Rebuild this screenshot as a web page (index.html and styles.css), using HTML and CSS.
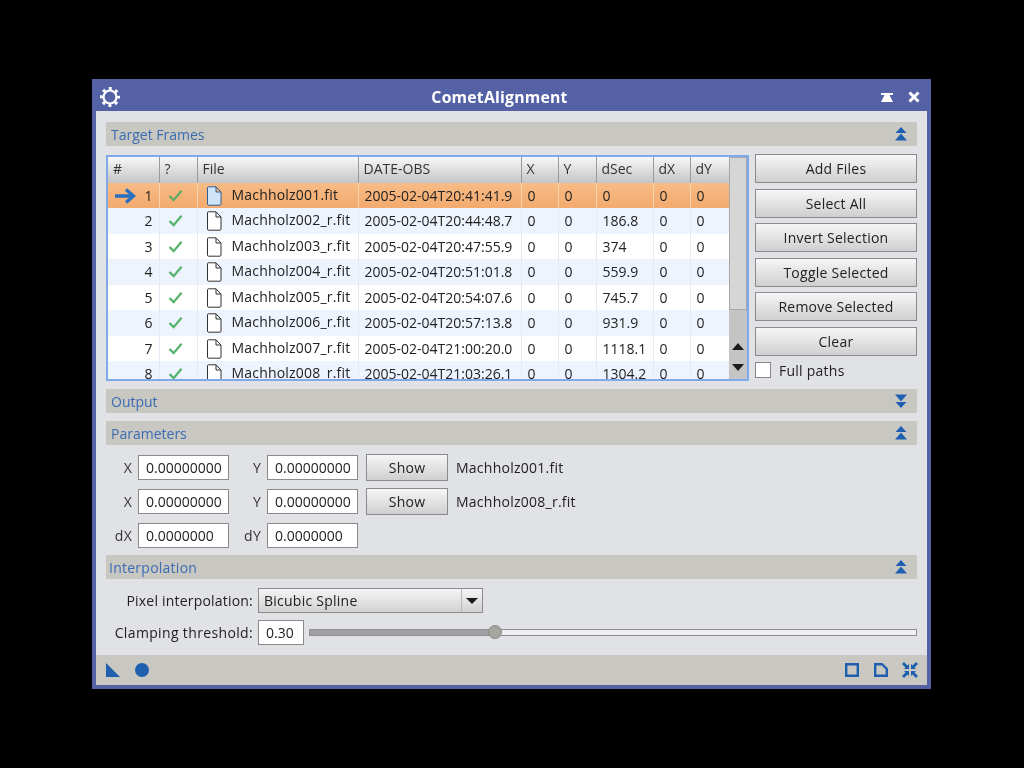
FILE: index.html
```html
<!DOCTYPE html>
<html lang="en">
<head>
    <meta charset="UTF-8">
    <title>CometAlignment</title>
    <link rel="stylesheet" href="styles.css">
</head>
<body>
    <svg class="defs" width="0" height="0">
        <symbol id="sec-up" viewBox="0 0 12 14"><path d="M6 0 11.500 6H.5zM6 6.500 12 13.500H0z"/></symbol>
        <symbol id="sec-down" viewBox="0 0 12 14"><path d="M0 .5H12L6 7.500zM.5 8H11.500L6 14z"/></symbol>
        <symbol id="doc" viewBox="0 0 16 20"><path d="M1.500 1.500C1.500 1 2 .8 2.500.8H10L15 6V18C15 18.800 14.500 19.200 14 19.200H2.500C2 19.200 1.500 18.800 1.500 18Z M10 .8V6H15"/></symbol>
        <symbol id="check" viewBox="0 0 16 14"><path d="M1.500 7.500 6 12 14.500 2" fill="none" stroke-width="2.500"/></symbol>
    </svg>

    <div class="window">
        <!-- Title bar -->
        <div class="titlebar">
            <svg class="gear" viewBox="0 0 24 24"><circle class="gear-ring" cx="12" cy="12" r="6.500"/><circle class="gear-teeth" cx="12" cy="12" r="8.500"/></svg>
            <div class="title">CometAlignment</div>
            <div class="title-buttons">
                <svg class="tb-shade" viewBox="0 0 12 9"><path d="M0 0H12V2H8.500L12 9H0L3.500 2H0z"/></svg>
                <svg class="tb-close" viewBox="0 0 12 12"><path d="M1.500 1.500 10.500 10.500M10.500 1.500 1.500 10.500"/></svg>
            </div>
        </div>

        <div class="content">
            <!-- Target Frames -->
            <div class="section-bar">
                <span>Target Frames</span>
                <svg class="sec-icon"><use href="#sec-up"/></svg>
            </div>
            <div class="frames">
                <div class="table-box">
                    <div class="table-clip">
                        <table>
                            <colgroup>
                                <col class="c-num"><col class="c-ok"><col class="c-file"><col class="c-date">
                                <col class="c-x"><col class="c-y"><col class="c-sec"><col class="c-dx"><col class="c-dy">
                            </colgroup>
                            <tr class="head">
                                <th>#</th><th>?</th><th>File</th><th>DATE-OBS</th><th>X</th><th>Y</th><th>dSec</th><th>dX</th><th>dY</th>
                            </tr>
                            <tr class="selected">
                                <td class="num"><svg class="arrow" viewBox="0 0 22 16"><path d="M1 8H19M12 1.500 19.500 8 12 14.500"/></svg>1</td>
                                <td><svg class="check"><use href="#check"/></svg></td>
                                <td class="file"><svg class="doc"><use href="#doc"/></svg>Machholz001.fit</td>
                                <td>2005-02-04T20:41:41.9</td><td>0</td><td>0</td><td>0</td><td>0</td><td>0</td>
                            </tr>
                            <tr class="alt">
                                <td class="num">2</td>
                                <td><svg class="check"><use href="#check"/></svg></td>
                                <td class="file"><svg class="doc"><use href="#doc"/></svg>Machholz002_r.fit</td>
                                <td>2005-02-04T20:44:48.7</td><td>0</td><td>0</td><td>186.8</td><td>0</td><td>0</td>
                            </tr>
                            <tr>
                                <td class="num">3</td>
                                <td><svg class="check"><use href="#check"/></svg></td>
                                <td class="file"><svg class="doc"><use href="#doc"/></svg>Machholz003_r.fit</td>
                                <td>2005-02-04T20:47:55.9</td><td>0</td><td>0</td><td>374</td><td>0</td><td>0</td>
                            </tr>
                            <tr class="alt">
                                <td class="num">4</td>
                                <td><svg class="check"><use href="#check"/></svg></td>
                                <td class="file"><svg class="doc"><use href="#doc"/></svg>Machholz004_r.fit</td>
                                <td>2005-02-04T20:51:01.8</td><td>0</td><td>0</td><td>559.9</td><td>0</td><td>0</td>
                            </tr>
                            <tr>
                                <td class="num">5</td>
                                <td><svg class="check"><use href="#check"/></svg></td>
                                <td class="file"><svg class="doc"><use href="#doc"/></svg>Machholz005_r.fit</td>
                                <td>2005-02-04T20:54:07.6</td><td>0</td><td>0</td><td>745.7</td><td>0</td><td>0</td>
                            </tr>
                            <tr class="alt">
                                <td class="num">6</td>
                                <td><svg class="check"><use href="#check"/></svg></td>
                                <td class="file"><svg class="doc"><use href="#doc"/></svg>Machholz006_r.fit</td>
                                <td>2005-02-04T20:57:13.8</td><td>0</td><td>0</td><td>931.9</td><td>0</td><td>0</td>
                            </tr>
                            <tr>
                                <td class="num">7</td>
                                <td><svg class="check"><use href="#check"/></svg></td>
                                <td class="file"><svg class="doc"><use href="#doc"/></svg>Machholz007_r.fit</td>
                                <td>2005-02-04T21:00:20.0</td><td>0</td><td>0</td><td>1118.1</td><td>0</td><td>0</td>
                            </tr>
                            <tr class="alt">
                                <td class="num">8</td>
                                <td><svg class="check"><use href="#check"/></svg></td>
                                <td class="file"><svg class="doc"><use href="#doc"/></svg>Machholz008_r.fit</td>
                                <td>2005-02-04T21:03:26.1</td><td>0</td><td>0</td><td>1304.2</td><td>0</td><td>0</td>
                            </tr>
                        </table>
                    </div>
                    <div class="scrollbar">
                        <div class="thumb"></div>
                        <div class="arrow-up"></div>
                        <div class="arrow-down"></div>
                    </div>
                </div>
                <div class="side">
                    <button class="btn">Add Files</button>
                    <button class="btn">Select All</button>
                    <button class="btn">Invert Selection</button>
                    <button class="btn">Toggle Selected</button>
                    <button class="btn">Remove Selected</button>
                    <button class="btn">Clear</button>
                    <div class="check-row"><span class="checkbox"></span>Full paths</div>
                </div>
            </div>

            <!-- Output -->
            <div class="section-bar bar-output">
                <span>Output</span>
                <svg class="sec-icon"><use href="#sec-down"/></svg>
            </div>

            <!-- Parameters -->
            <div class="section-bar bar-params">
                <span>Parameters</span>
                <svg class="sec-icon"><use href="#sec-up"/></svg>
            </div>
            <div class="params">
                <div class="param-row">
                    <span class="lbl">X</span><span class="field">0.00000000</span>
                    <span class="lbl lbl-y">Y</span><span class="field">0.00000000</span>
                    <button class="btn btn-show">Show</button><span class="frame-name">Machholz001.fit</span>
                </div>
                <div class="param-row">
                    <span class="lbl">X</span><span class="field">0.00000000</span>
                    <span class="lbl lbl-y">Y</span><span class="field">0.00000000</span>
                    <button class="btn btn-show">Show</button><span class="frame-name">Machholz008_r.fit</span>
                </div>
                <div class="param-row">
                    <span class="lbl">dX</span><span class="field">0.0000000</span>
                    <span class="lbl lbl-y">dY</span><span class="field">0.0000000</span>
                </div>
            </div>

            <!-- Interpolation -->
            <div class="section-bar bar-interp">
                <span>Interpolation</span>
                <svg class="sec-icon"><use href="#sec-up"/></svg>
            </div>
            <div class="interp">
                <div class="interp-row">
                    <span class="lbl-wide">Pixel interpolation:</span>
                    <div class="combo"><span class="combo-text">Bicubic Spline</span><span class="combo-arrow"></span></div>
                </div>
                <div class="interp-row row-clamp">
                    <span class="lbl-wide lbl-clamp">Clamping threshold:</span>
                    <span class="field field-small">0.30</span>
                    <div class="slider"><div class="slider-fill"></div><div class="slider-handle"></div></div>
                </div>
            </div>
        </div>

        <!-- Bottom control bar -->
        <div class="footer">
            <svg class="foot-icon" viewBox="0 0 14 14"><path d="M0 0 14 14H0z"/></svg>
            <svg class="foot-icon foot-dot" viewBox="0 0 14 14"><circle cx="7" cy="7" r="7"/></svg>
            <div class="foot-right">
                <svg class="foot-icon" viewBox="0 0 14 14"><path class="outline" d="M1.200 1.200H12.800V12.800H1.200z"/></svg>
                <svg class="foot-icon" viewBox="0 0 14 14"><path class="outline" d="M1.200 1.200H8L12.800 6V12.800H1.200z"/></svg>
                <svg class="foot-icon foot-wide" viewBox="0 0 16 16"><path d="M0 2 2 0 5.500 3.500 7 2V7H2L3.500 5.500zM16 2 14 0 10.500 3.500 9 2V7H14L12.500 5.500zM0 14 2 16 5.500 12.500 7 14V9H2L3.500 10.500zM16 14 14 16 10.500 12.500 9 14V9H14L12.500 10.500z"/></svg>
            </div>
        </div>
    </div>
</body>
</html>
```

FILE: styles.css
```css
/* Page: black desktop around the process window */
body {
    margin: 0;
    background: #000;
    font-family: "Open Sans", "Noto Sans", sans-serif;
    font-size: 14px;
    letter-spacing: 0.25px;
    color: #222;
}

.defs {
    display: block;
    height: 0;
}

.window {
    width: 839px;
    height: 610px;
    margin: 79px 0 0 92px;
    box-sizing: border-box;
    display: flex;
    flex-direction: column;
    background: #5561a5;
    padding: 0 4px 4px;
    filter: blur(0.4px);
}

/* Title bar */
.titlebar {
    height: 32px;
    box-sizing: border-box;
    padding-top: 4px;
    display: flex;
    align-items: center;
    flex-shrink: 0;
}

.gear {
    width: 24px;
    height: 24px;
    margin-left: 2px;
    fill: none;
    stroke: #fff;
}

.gear-ring {
    stroke-width: 2.200;
}

.gear-teeth {
    stroke-width: 3;
    stroke-dasharray: 3 3.676;
    stroke-dashoffset: 1.500;
}

.title {
    flex: 1;
    text-align: center;
    color: #fff;
    font-weight: 700;
    font-size: 15.800px;
    letter-spacing: 0.2px;
    margin-left: 2px;
}

.title-buttons {
    width: 52px;
    display: flex;
    align-items: center;
}

.tb-shade {
    width: 12px;
    height: 9px;
    margin-left: 6px;
    fill: #fff;
}

.tb-close {
    width: 12px;
    height: 12px;
    margin-left: 15px;
    fill: none;
    stroke: #fff;
    stroke-width: 3;
}

.content {
    flex: 1;
    background: #e1e2e6;
    padding: 11px 10px 0;
}

/* Section bars */
.section-bar {
    height: 24px;
    background: #c8c7c1;
    display: flex;
    align-items: center;
    justify-content: space-between;
    padding: 0 10px 0 5px;
    color: #3a6cb4;
    letter-spacing: 0;
}

.bar-output {
    margin-top: 8px;
}

.bar-params {
    margin-top: 8px;
}

.bar-interp {
    padding-left: 3px;
    letter-spacing: 0.25px;
}

.sec-icon {
    width: 12px;
    height: 14px;
    fill: #1f5fb0;
}

/* Target frames */
.frames {
    display: flex;
    justify-content: space-between;
    margin-top: 8px;
}

.table-box {
    width: 643px;
    height: 226px;
    margin-top: 1px;
    box-sizing: border-box;
    border: 2px solid #7fa9e8;
    display: flex;
}

.table-clip {
    width: 621px;
    overflow: hidden;
}

table {
    width: 621px;
    table-layout: fixed;
    border-collapse: collapse;
    background: #fff;
}

.c-num { width: 51px; }
.c-ok { width: 38px; }
.c-file { width: 161px; }
.c-date { width: 163px; }
.c-x { width: 37px; }
.c-y { width: 38px; }
.c-sec { width: 57px; }
.c-dx { width: 37px; }
.c-dy { width: 39px; }

tr {
    height: 25.500px;
}

th, td {
    padding: 0 0 0 5px;
    text-align: left;
    font-weight: 400;
    white-space: nowrap;
    overflow: hidden;
    letter-spacing: 0;
    border-right: 1px solid #e4eaf4;
}

td {
    padding-left: 6px;
}

th {
    height: 24px;
    padding-bottom: 2px;
    box-sizing: border-box;
    background: linear-gradient(#f8f8f8, #c4c4c4);
    border-right: 1px solid #9b9b9b;
    color: #333;
}

.alt td {
    background: #eef4fd;
}

.selected td {
    background: linear-gradient(#f7bb85, #f3aa6e);
    border-right-color: #fbd3ae;
}

td.num {
    text-align: right;
    padding: 0 6px 0 0;
    position: relative;
}

.arrow {
    position: absolute;
    left: 6px;
    top: 5px;
    width: 22px;
    height: 16px;
    fill: none;
    stroke: #2a6fc0;
    stroke-width: 3.400;
}

.check {
    display: block;
    width: 15px;
    height: 13px;
    margin-left: 2px;
    stroke: #55b36c;
}

.selected .check {
    stroke: #63a96b;
}

td.file {
    padding-left: 8px;
    letter-spacing: 0.2px;
}

.doc {
    width: 16px;
    height: 20px;
    margin-right: 10px;
    vertical-align: middle;
    fill: #fff;
    stroke: #333;
    stroke-width: 1;
}

.selected .doc {
    fill: #cfe4f8;
    stroke: #2f5f96;
}

.scrollbar {
    flex: 1;
    background: #c4c4c4;
    position: relative;
}

.thumb {
    height: 153px;
    box-sizing: border-box;
    border: 1px solid #a8a8a8;
    background: #d6d6d6;
}

.arrow-up, .arrow-down {
    position: absolute;
    left: 3px;
    width: 0;
    height: 0;
    border-left: 6px solid transparent;
    border-right: 6px solid transparent;
}

.arrow-up {
    top: 186px;
    border-bottom: 7px solid #1c1c1c;
}

.arrow-down {
    top: 207px;
    border-top: 7px solid #1c1c1c;
}

.side {
    width: 162px;
    display: flex;
    flex-direction: column;
    gap: 5.500px;
}

.btn {
    height: 29px;
    padding: 0;
    border: 1px solid #8b8b8b;
    background: linear-gradient(#f6f6f6, #cfcfcf);
    font: inherit;
    letter-spacing: inherit;
    color: #222;
}

.check-row {
    display: flex;
    align-items: center;
    height: 18px;
}

.checkbox {
    width: 16px;
    height: 16px;
    box-sizing: border-box;
    border: 1px solid #888;
    background: #fff;
    margin-right: 8px;
}

/* Parameters */
.params {
    padding-top: 9px;
    height: 110px;
    box-sizing: border-box;
}

.param-row {
    display: flex;
    align-items: center;
    height: 27px;
    margin-bottom: 7px;
}

.lbl {
    width: 26px;
    text-align: right;
    margin-right: 6px;
    color: #333;
}

.lbl-y {
    width: 32px;
}

.field {
    width: 91px;
    height: 25px;
    box-sizing: border-box;
    border: 1px solid #8b8b8b;
    background: #fff;
    padding-left: 7px;
    line-height: 23px;
    letter-spacing: 0;
}

.btn-show {
    width: 82px;
    height: 27px;
    margin-left: 8px;
}

.frame-name {
    margin-left: 8px;
}

/* Interpolation */
.interp {
    padding-top: 9px;
}

.interp-row {
    display: flex;
    align-items: center;
    height: 25px;
}

.row-clamp {
    margin-top: 7px;
}

.lbl-wide {
    width: 147px;
    text-align: right;
    margin-right: 5px;
    letter-spacing: 0.2px;
    white-space: nowrap;
}

.lbl-clamp {
    letter-spacing: 0.35px;
}

.combo {
    width: 225px;
    height: 25px;
    box-sizing: border-box;
    border: 1px solid #8b8b8b;
    background: linear-gradient(#f4f4f4, #d2d2d2);
    display: flex;
    align-items: center;
    padding-left: 5px;
}

.combo-text {
    flex: 1;
}

.combo-arrow {
    width: 21px;
    height: 23px;
    box-sizing: border-box;
    border-left: 1px solid #bbb;
    position: relative;
}

.combo-arrow::after {
    content: "";
    position: absolute;
    left: 4px;
    top: 9px;
    border-left: 6px solid transparent;
    border-right: 6px solid transparent;
    border-top: 6px solid #1c1c1c;
}

.field-small {
    width: 46px;
}

.slider {
    flex: 1;
    height: 7px;
    margin-left: 5px;
    box-sizing: border-box;
    border: 1px solid #8f8f8f;
    background: #efefef;
    position: relative;
}

.slider-fill {
    width: 185px;
    height: 100%;
    background: #a2a2a2;
}

.slider-handle {
    position: absolute;
    left: 178px;
    top: -5px;
    width: 14px;
    height: 14px;
    border-radius: 50%;
    background: #a6a6a0;
    border: 1px solid #8a8a84;
    box-sizing: border-box;
}

/* Bottom control bar */
.footer {
    height: 30px;
    background: #c8c7c1;
    display: flex;
    align-items: center;
    padding: 0 9px 0 10px;
    flex-shrink: 0;
}

.foot-icon {
    width: 14px;
    height: 14px;
    fill: #1f5fb0;
}

.foot-dot {
    margin-left: 15px;
}

.foot-right {
    margin-left: auto;
    display: flex;
    align-items: center;
    gap: 15px;
}

.foot-wide {
    width: 16px;
    height: 16px;
    margin-left: -1px;
}

.outline {
    fill: none;
    stroke: #1f5fb0;
    stroke-width: 2.400;
}
```
